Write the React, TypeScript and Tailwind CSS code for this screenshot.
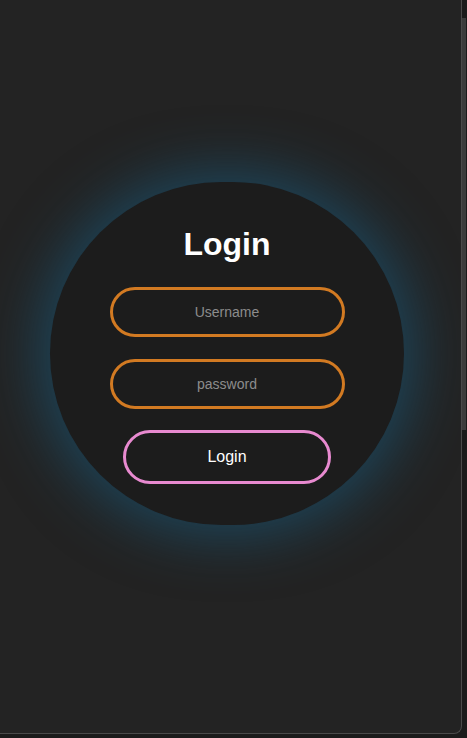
export default function App() {
  return (
    <div
      className="flex h-[738px] w-[467px] bg-[#1b1b1b]"
      style={{ fontFamily: "'Liberation Sans', Arial, sans-serif" }}
    >
      {/* page panel */}
      <div className="flex h-[734px] w-[462px] flex-col items-center justify-center rounded-br-[8px] border-b border-r border-[#4a4a4a] bg-[#232323] pb-[26px] pr-[7px]">
        <div className="flex h-[343px] w-[354px] flex-col items-center justify-center rounded-full bg-[#1c1c1c] shadow-[0_0_55px_12px_rgba(24,96,134,0.55)]">
          <h1 className="mb-[22px] text-[32px] font-bold leading-[41px] text-white">Login</h1>
          <input
            type="text"
            placeholder="Username"
            className="h-[50px] w-[235px] rounded-full border-[3px] border-[#d27a22] bg-transparent text-center text-[14px] text-white outline-none placeholder:text-[#8c8c8c]"
          />
          <input
            type="password"
            placeholder="password"
            className="mt-[22px] h-[50px] w-[235px] rounded-full border-[3px] border-[#d27a22] bg-transparent text-center text-[14px] text-white outline-none placeholder:text-[#8c8c8c]"
          />
          <button className="mt-[21px] h-[54px] w-[208px] rounded-full border-[3px] border-[#e88ad0] bg-transparent text-[16px] text-white">
            Login
          </button>
        </div>
      </div>
      {/* scrollbar strip */}
      <div className="flex w-[5px] flex-col pt-[18px]">
        <div className="h-[412px] w-[4px] bg-[#3c3c3c]" />
      </div>
    </div>
  );
}
